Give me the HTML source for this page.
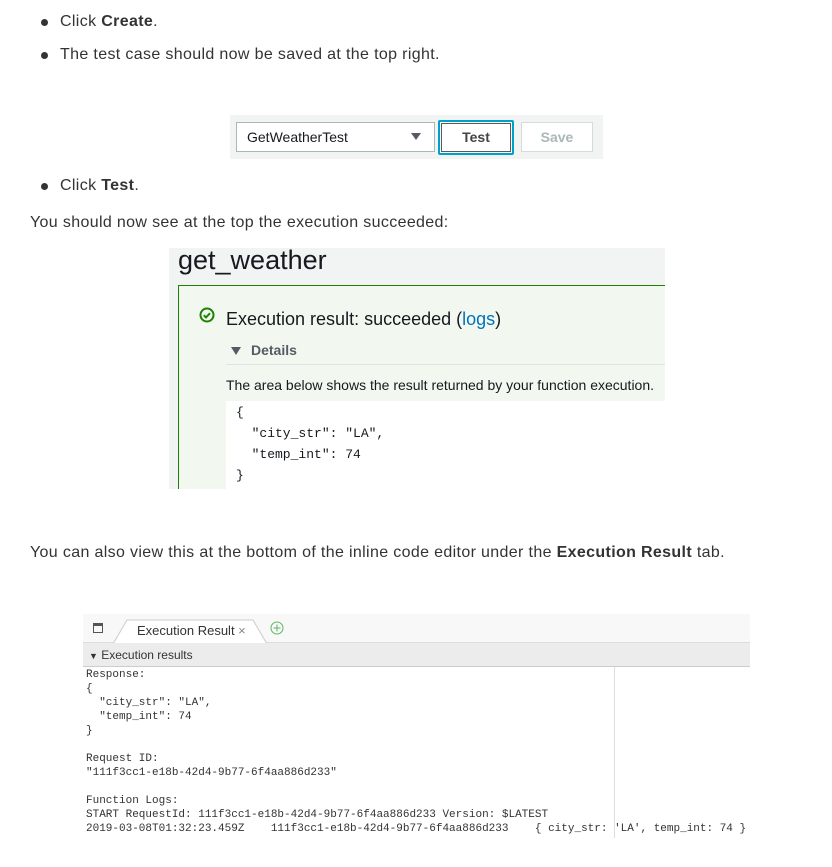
<!DOCTYPE html>
<html><head><meta charset="utf-8">
<style>
*{margin:0;padding:0;box-sizing:border-box}
body{width:832px;height:867px;background:#fff;position:relative;font-family:"Liberation Sans",sans-serif;color:#333;overflow:hidden}
.a{position:absolute;white-space:nowrap}
.t{font-size:16px;letter-spacing:0.35px}
.dot{position:absolute;width:7px;height:7px;border-radius:50%;background:#333}
.mono{font-family:"Liberation Mono",monospace}
pre.a{white-space:pre}
</style></head><body>

<div class="dot" style="left:41px;top:19px"></div>
<div class="a t" style="left:60px;top:13px">Click <b>Create</b>.</div>
<div class="dot" style="left:41px;top:52px"></div>
<div class="a t" style="left:60px;top:46px">The test case should now be saved at the top right.</div>

<!-- toolbar -->
<div class="a" style="left:230px;top:115px;width:373px;height:44px;background:#f2f3f3"></div>
<div class="a" style="left:236px;top:122px;width:199px;height:30px;background:#fff;border:1px solid #aab7b8;font-size:14px;padding:6px 10px;color:#16191f">GetWeatherTest</div>
<div class="a" style="left:411px;top:133px;width:0;height:0;border-left:5px solid transparent;border-right:5px solid transparent;border-top:7px solid #545b64"></div>
<div class="a" style="left:438px;top:120px;width:76px;height:35px;border:2px solid #00a1c9;border-radius:2px;background:#fff;padding:1px">
 <div style="width:100%;height:100%;border:1px solid #545b64;font-size:14px;font-weight:bold;text-align:center;line-height:27px;color:#444">Test</div></div>
<div class="a" style="left:521px;top:122px;width:72px;height:30px;border:1px solid #d5dbdb;background:#fff;font-size:14px;font-weight:bold;text-align:center;line-height:28px;color:#aab7b8">Save</div>

<div class="dot" style="left:41px;top:183px"></div>
<div class="a t" style="left:60px;top:177px">Click <b>Test</b>.</div>
<div class="a t" style="left:30px;top:214px">You should now see at the top the execution succeeded:</div>

<!-- get_weather panel -->
<div class="a" style="left:169px;top:248px;width:496px;height:241px;background:#f2f3f3;overflow:hidden">
 <div class="a" style="left:9px;top:-3px;font-size:27px;color:#16191f">get_weather</div>
 <div class="a" style="left:9px;top:37px;width:500px;height:220px;border:1px solid #1d8102;background:#f2f8f0"></div>
 <svg class="a" style="left:30px;top:59px" width="16" height="16" viewBox="0 0 16 16"><circle cx="8" cy="8" r="6.5" fill="none" stroke="#1d8102" stroke-width="2"/><path d="M4.8 8.2l2.2 2.2 4-4.2" fill="none" stroke="#1d8102" stroke-width="2"/></svg>
 <div class="a" style="left:57px;top:61px;font-size:18px;color:#16191f">Execution result: succeeded (<span style="color:#0073bb">logs</span>)</div>
 <div class="a" style="left:62px;top:99px;width:0;height:0;border-left:5px solid transparent;border-right:5px solid transparent;border-top:8px solid #545b64"></div>
 <div class="a" style="left:82px;top:94px;font-size:14px;font-weight:bold;color:#545b64">Details</div>
 <div class="a" style="left:57px;top:116px;width:450px;height:1px;background:#e1e4e4"></div>
 <div class="a" style="left:57px;top:129px;font-size:14px;color:#16191f">The area below shows the result returned by your function execution.</div>
 <div class="a" style="left:57px;top:153px;width:450px;height:100px;background:#fff"></div>
 <pre class="a mono" style="left:67px;top:154px;font-size:13px;line-height:21px;color:#16191f">{
  "city_str": "LA",
  "temp_int": 74
}</pre>
</div>

<div class="a t" style="left:30px;top:544px">You can also view this at the bottom of the inline code editor under the <b>Execution Result</b> tab.</div>

<!-- editor panel -->
<div class="a" style="left:83px;top:614px;width:667px;height:224px;background:#fff;overflow:hidden">
 <div class="a" style="left:0;top:0;width:667px;height:29px;background:#f8f8f8;border-bottom:1px solid #ddd"></div>
 <div class="a" style="left:10px;top:9px;width:10px;height:10px;border:1.5px solid #555;border-top-width:3px"></div>
 <svg class="a" style="left:30px;top:3px" width="160" height="27"><path d="M0 27 L14 3 H140 L154 27" fill="#fff" stroke="#ccc"/></svg>
 <div class="a" style="left:54px;top:9px;font-size:13px;color:#333">Execution Result <span style="color:#888">×</span></div>
 <svg class="a" style="left:187px;top:7px" width="14" height="14"><circle cx="7" cy="7" r="6" fill="none" stroke="#5cb85c"/><path d="M7 3.5v7M3.5 7h7" stroke="#5cb85c"/></svg>
 <div class="a" style="left:0;top:29px;width:667px;height:24px;background:#ececec;border-bottom:1px solid #ccc"></div>
 <div class="a" style="left:6px;top:34px;font-size:12px;color:#333"><span style="font-size:9px">▼</span> Execution results</div>
 <div class="a" style="left:531px;top:53px;width:1px;height:171px;background:#ddd"></div>
 <pre class="a mono" style="left:3px;top:54px;font-size:11px;line-height:14px;color:#333">Response:
{
  "city_str": "LA",
  "temp_int": 74
}

Request ID:
"111f3cc1-e18b-42d4-9b77-6f4aa886d233"

Function Logs:
START RequestId: 111f3cc1-e18b-42d4-9b77-6f4aa886d233 Version: $LATEST
2019-03-08T01:32:23.459Z    111f3cc1-e18b-42d4-9b77-6f4aa886d233    { city_str: 'LA', temp_int: 74 }</pre>
</div>
</body></html>
